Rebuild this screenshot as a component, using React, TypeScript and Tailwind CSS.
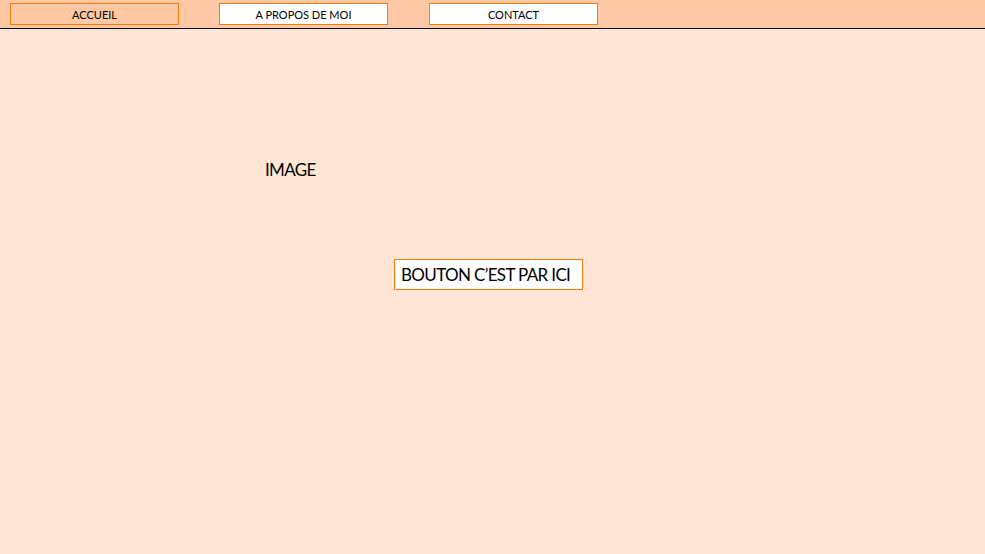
export default function App() {
  const font = { fontFamily: 'Lato, "Open Sans", sans-serif' };
  return (
    <div className="w-[985px] h-[554px] bg-[#ffe5d5] flex flex-col" style={font}>
      <header className="h-[29px] bg-[#ffc8a4] border-b border-black flex items-start pt-[3px] pl-[10px] gap-[40px]">
        <div className="w-[169px] h-[22px] border border-[#ff7a0a] flex items-center justify-center pt-[2px] text-[11px] text-black">ACCUEIL</div>
        <div className="w-[169px] h-[22px] border border-[#ff7a0a] bg-white flex items-center justify-center pt-[2px] text-[11px] text-black">A PROPOS DE MOI</div>
        <div className="w-[169px] h-[22px] border border-[#ff7a0a] bg-white flex items-center justify-center pt-[2px] text-[11px] text-black ml-[1px]">CONTACT</div>
      </header>
      <main className="flex flex-col items-start">
        <div className="ml-[265px] mt-[129px] text-[17px] leading-[24px] tracking-[-0.65px] text-black">IMAGE</div>
        <div className="ml-[394px] mt-[77px] h-[31px] w-[189px] border border-[#ff7a0a] bg-white flex items-center pl-[6px] pt-[1px] text-[17px] tracking-[-0.65px] whitespace-nowrap text-black">BOUTON C’EST PAR ICI</div>
      </main>
    </div>
  );
}
